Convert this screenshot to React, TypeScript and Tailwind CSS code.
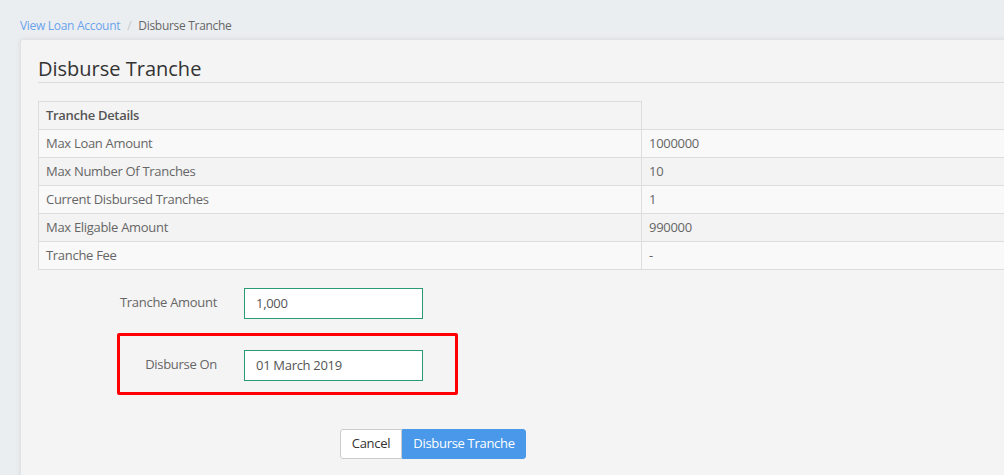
import React from "react";

const rows: [string, string][] = [
  ["Max Loan Amount", "1000000"],
  ["Max Number Of Tranches", "10"],
  ["Current Disbursed Tranches", "1"],
  ["Max Eligable Amount", "990000"],
  ["Tranche Fee", "-"],
];

export default function App() {
  return (
    <div
      className="w-[1004px] h-[475px] overflow-hidden bg-[#ebeef1] text-[#666] tracking-[-0.3px]"
      style={{ fontFamily: '"Open Sans", "Noto Sans", sans-serif' }}
    >
      <div className="flex items-center h-[39px] pl-[20px] pt-[13px] text-[12px]">
        <span className="text-[#6aa3ec]">View Loan Account</span>
        <span className="mx-[7px] text-[#c8c8c8]">/</span>
        <span className="text-[#666]">Disburse Tranche</span>
      </div>
      <div className="ml-[20px] w-[1300px] h-[500px] bg-[#f4f4f4] rounded-tl-[3px] border-l border-t border-[#e2e2e2] shadow-[0_0_4px_rgba(0,0,0,0.08)] pl-[17px] pt-[17px]">
        <div className="w-[1240px] border-b border-[#dcdcdc] pb-[1px]">
          <h1 className="text-[20px] leading-[24px] text-[#333] tracking-normal">Disburse Tranche</h1>
        </div>
        <table className="mt-[18px] w-[1206px] border-collapse text-[13px] table-fixed">
          <tbody>
            <tr className="h-[28px]">
              <th className="w-[603px] border border-[#dddddd] text-left font-semibold text-[#555] pl-[7px] py-0">
                Tranche Details
              </th>
              <th className="w-[603px]"></th>
            </tr>
            {rows.map(([k, v], i) => (
              <tr
                key={k}
                className={`h-[28px] ${i % 2 === 0 ? "bg-[#f9f9f9]" : "bg-[#f3f3f3]"}`}
              >
                <td className="border border-[#dddddd] pl-[7px] py-0">{k}</td>
                <td className="border border-[#dddddd] pl-[7px] py-0">{v}</td>
              </tr>
            ))}
          </tbody>
        </table>

        <div className="mt-[18px] flex items-center text-[13px]">
          <label className="w-[179px] text-right pr-0 -mt-[2px]">Tranche Amount</label>
          <div className="ml-[27px] w-[179px] h-[31px] border border-[#2a9a76] bg-white flex items-center pl-[11px] text-[#555]">
            1,000
          </div>
        </div>

        <div className="relative mt-[31px] flex items-center text-[13px]">
          <div className="absolute left-[79px] top-[-17px] w-[341px] h-[62px] border-[3px] border-[#ff0000] rounded-[2px] pointer-events-none" />
          <label className="w-[179px] text-right -mt-[2px]">Disburse On</label>
          <div className="ml-[27px] w-[179px] h-[31px] border border-[#2a9a76] bg-white flex items-center pl-[11px] text-[#555]">
            01 March 2019
          </div>
        </div>

        <div className="mt-[48px] ml-[302px] flex text-[13px]">
          <button className="h-[30px] w-[62px] bg-white border border-[#cccccc] rounded-l-[3px] text-[#333]">
            Cancel
          </button>
          <button className="h-[30px] w-[124px] bg-[#4a98e9] border border-[#4a98e9] rounded-r-[3px] text-white">
            Disburse Tranche
          </button>
        </div>
      </div>
    </div>
  );
}
